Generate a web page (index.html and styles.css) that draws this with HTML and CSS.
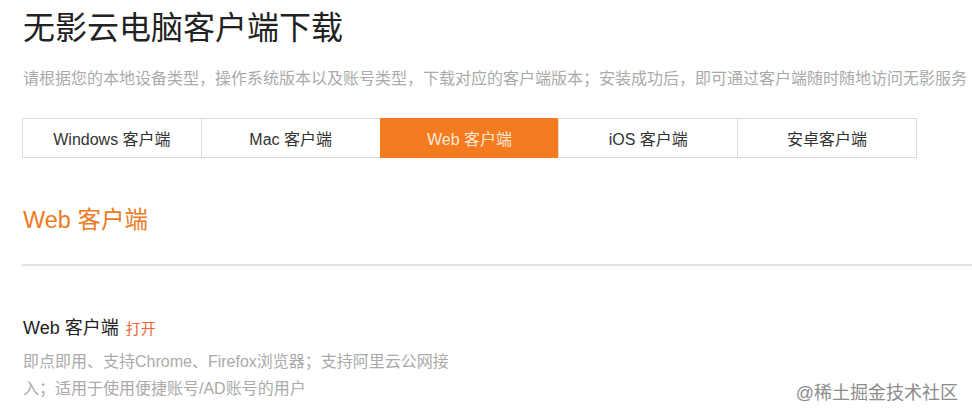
FILE: index.html
```html
<!DOCTYPE html>
<html lang="zh-CN">
<head>
<meta charset="utf-8">
<title>无影云电脑客户端下载</title>
<link rel="stylesheet" href="styles.css">
</head>
<body>
<main class="page">
  <h1 class="title">无影云电脑客户端下载</h1>
  <p class="subtitle">请根据您的本地设备类型，操作系统版本以及账号类型，下载对应的客户端版本；安装成功后，即可通过客户端随时随地访问无影服务</p>
  <nav class="tabs">
    <div class="tab">Windows 客户端</div>
    <div class="tab">Mac 客户端</div>
    <div class="tab active">Web 客户端</div>
    <div class="tab">iOS 客户端</div>
    <div class="tab">安卓客户端</div>
  </nav>
  <h2 class="section-title">Web 客户端</h2>
  <hr class="divider">
  <section class="client">
    <h3 class="client-name">Web 客户端 <a class="open-link">打开</a></h3>
    <p class="client-desc">即点即用、支持Chrome、Firefox浏览器；支持阿里云公网接入；适用于使用便捷账号/AD账号的用户</p>
  </section>
</main>
<div class="watermark">@稀土掘金技术社区</div>
</body>
</html>
```
FILE: styles.css
```css
html, body {
  margin: 0;
  padding: 0;
  background: #fff;
}
body {
  font-family: "Liberation Sans", "Noto Sans CJK SC", sans-serif;
  color: #333;
  width: 972px;
  height: 418px;
  overflow: hidden;
  position: relative;
}
.page {
  padding: 0 0 0 22px;
}
.title {
  margin: 6px 0 0 1px;
  font-size: 32px;
  line-height: 44px;
  font-weight: normal;
  color: #222;
}
.subtitle {
  margin: 17px 0 0 1px;
  font-size: 16px;
  line-height: 24px;
  color: #aaa;
  white-space: nowrap;
}
.tabs {
  display: flex;
  width: 895px;
  margin-top: 27px;
  box-sizing: border-box;
  border: 1px solid #dcdcdc;
}
.tab {
  flex: 1;
  height: 38px;
  display: flex;
  align-items: center;
  justify-content: center;
  font-size: 16px;
  color: #333;
  border-left: 1px solid #dcdcdc;
}
.tab:first-child {
  border-left: none;
}
.tab.active {
  background: #f47b20;
  color: #fde8d6;
  margin: -1px 0;
  height: 40px;
  border-left-color: #f47b20;
}
.section-title {
  margin: 47px 0 0 1px;
  font-size: 23.5px;
  line-height: 30px;
  font-weight: normal;
  color: #ee7a22;
}
.divider {
  margin: 29px 0 0 0;
  border: none;
  border-top: 2px solid #e3e3e3;
  height: 0;
}
.client {
  margin-top: 50px;
}
.client-name {
  margin: 0 0 0 1px;
  font-size: 18px;
  line-height: 24px;
  font-weight: normal;
  color: #222;
}
.open-link {
  font-size: 15px;
  color: #f0643a;
  margin-left: 2px;
}
.client-desc {
  margin: 7px 0 0 1px;
  width: 436px;
  font-size: 16px;
  line-height: 27px;
  color: #aaa;
}
.watermark {
  position: absolute;
  right: 14px;
  bottom: 13px;
  font-size: 18px;
  line-height: 24px;
  color: #8c8c8c;
}
```
